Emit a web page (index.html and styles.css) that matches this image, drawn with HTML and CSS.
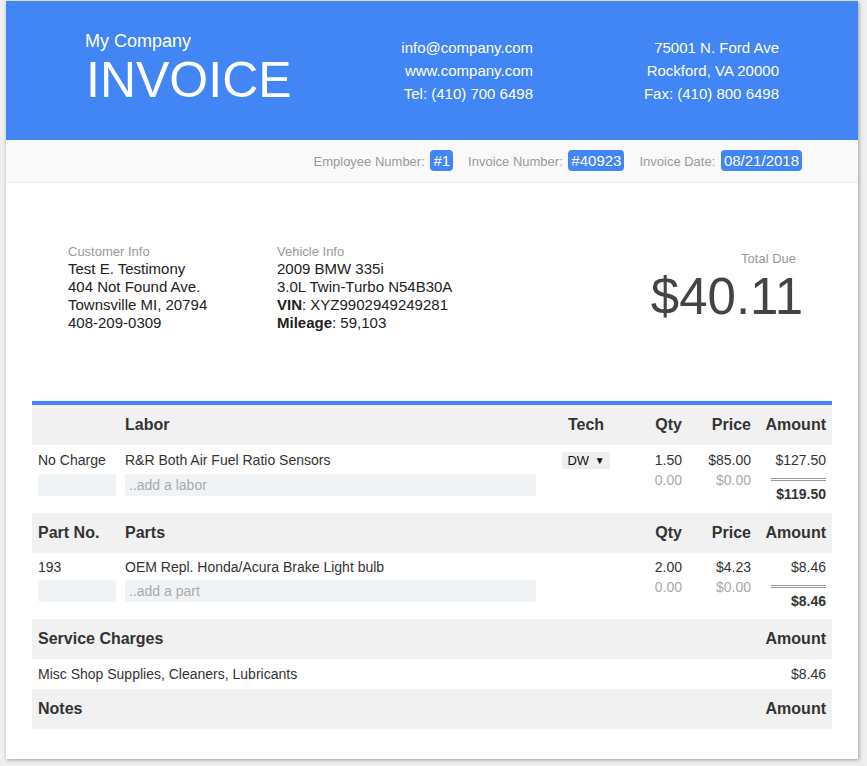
FILE: index.html
```html
<!DOCTYPE html>
<html>
<head>
<meta charset="utf-8">
<link rel="stylesheet" href="styles.css">
</head>
<body>
<div class="page">
  <header class="top">
    <div class="brand">
      <div class="company">My Company</div>
      <div class="title">INVOICE</div>
    </div>
    <div class="contact">
      <div>info@company.com</div>
      <div>www.company.com</div>
      <div>Tel: (410) 700 6498</div>
    </div>
    <div class="address">
      <div>75001 N. Ford Ave</div>
      <div>Rockford, VA 20000</div>
      <div>Fax: (410) 800 6498</div>
    </div>
  </header>

  <div class="meta">
    <div class="meta-item">Employee Number: <span class="badge">#1</span></div>
    <div class="meta-item">Invoice Number: <span class="badge">#40923</span></div>
    <div class="meta-item">Invoice Date: <span class="badge">08/21/2018</span></div>
  </div>

  <section class="info">
    <div class="info-col customer">
      <div class="label">Customer Info</div>
      <div>Test E. Testimony</div>
      <div>404 Not Found Ave.</div>
      <div>Townsville MI, 20794</div>
      <div>408-209-0309</div>
    </div>
    <div class="info-col vehicle">
      <div class="label">Vehicle Info</div>
      <div>2009 BMW 335i</div>
      <div>3.0L Twin-Turbo N54B30A</div>
      <div><b>VIN</b>: XYZ9902949249281</div>
      <div><b>Mileage</b>: 59,103</div>
    </div>
    <div class="total">
      <div class="label">Total Due</div>
      <div class="total-amount">$40.11</div>
    </div>
  </section>

  <div class="items">
    <div class="grid head">
      <div class="cell"></div>
      <div class="cell">Labor</div>
      <div class="cell center">Tech</div>
      <div class="cell right">Qty</div>
      <div class="cell right">Price</div>
      <div class="cell right">Amount</div>
    </div>
    <div class="grid row labor-row">
      <div class="cell c1">
        <div class="line">No Charge</div>
        <div class="field"></div>
      </div>
      <div class="cell">
        <div class="line">R&amp;R Both Air Fuel Ratio Sensors</div>
        <div class="field">..add a labor</div>
      </div>
      <div class="cell center">
        <span class="select">DW <span class="caret">▼</span></span>
      </div>
      <div class="cell right">
        <div class="line">1.50</div>
        <div class="line muted">0.00</div>
      </div>
      <div class="cell right">
        <div class="line">$85.00</div>
        <div class="line muted">$0.00</div>
      </div>
      <div class="cell right">
        <div class="line">$127.50</div>
        <div class="rule"></div>
        <div class="line strong">$119.50</div>
      </div>
    </div>

    <div class="grid head">
      <div class="cell">Part No.</div>
      <div class="cell">Parts</div>
      <div class="cell"></div>
      <div class="cell right">Qty</div>
      <div class="cell right">Price</div>
      <div class="cell right">Amount</div>
    </div>
    <div class="grid row parts-row">
      <div class="cell c1">
        <div class="line">193</div>
        <div class="field"></div>
      </div>
      <div class="cell">
        <div class="line">OEM Repl. Honda/Acura Brake Light bulb</div>
        <div class="field">..add a part</div>
      </div>
      <div class="cell"></div>
      <div class="cell right">
        <div class="line">2.00</div>
        <div class="line muted">0.00</div>
      </div>
      <div class="cell right">
        <div class="line">$4.23</div>
        <div class="line muted">$0.00</div>
      </div>
      <div class="cell right">
        <div class="line">$8.46</div>
        <div class="rule"></div>
        <div class="line strong">$8.46</div>
      </div>
    </div>

    <div class="grid head">
      <div class="cell wide">Service Charges</div>
      <div class="cell right">Amount</div>
    </div>
    <div class="grid simple">
      <div class="cell wide">Misc Shop Supplies, Cleaners, Lubricants</div>
      <div class="cell right">$8.46</div>
    </div>

    <div class="grid head">
      <div class="cell wide">Notes</div>
      <div class="cell right">Amount</div>
    </div>
  </div>
</div>
</body>
</html>
```

FILE: styles.css
```css
html, body {
  margin: 0;
  padding: 0;
}

body {
  background: #efefef;
  font-family: "Liberation Sans", Arial, sans-serif;
  color: #222;
}

.page {
  width: 852px;
  margin: 1px 0 8px 6px;
  background: #fff;
  box-shadow: 1px 1px 4px rgba(0, 0, 0, 0.35);
  padding-bottom: 30px;
}

/* Header */
.top {
  height: 139px;
  box-sizing: border-box;
  background: #4285f4;
  color: #fff;
  display: flex;
  align-items: flex-start;
  padding: 30px 79px 0 79px;
}

.brand {
  flex: 1;
}

.company {
  font-size: 18px;
  line-height: 21px;
}

.title {
  font-size: 50px;
  line-height: 52px;
  margin-top: 2px;
  margin-left: 1px;
}

.contact,
.address {
  text-align: right;
  font-size: 15px;
  line-height: 23px;
  margin-top: 5px;
}

.address {
  width: 246px;
}

/* Meta bar */
.meta {
  height: 42px;
  background: #f9f9f9;
  border-bottom: 1px solid #ececec;
  display: flex;
  justify-content: flex-end;
  align-items: center;
  gap: 15px;
  padding-right: 56px;
  font-size: 13px;
  color: #999;
}

.badge {
  display: inline-block;
  background: #4285f4;
  color: #fff;
  font-size: 15px;
  line-height: 21px;
  padding: 0 3px;
  border-radius: 4px;
  margin-left: 2px;
  margin-top: -1px;
}

/* Customer / vehicle */
.info {
  display: flex;
  padding: 61px 62px 69px;
  font-size: 15px;
  line-height: 18px;
  color: #222;
}

.label {
  font-size: 13px;
  line-height: 16px;
  color: #999;
}

.customer {
  width: 209px;
}

.vehicle {
  flex: 1;
}

.total {
  text-align: right;
  margin-top: 7px;
}

.total-amount {
  font-size: 51px;
  line-height: 51px;
  color: #444;
  margin-top: 4px;
  margin-right: -7px;
}

/* Items table */
.items {
  margin: 0 26px;
  border-top: 4px solid #4285f4;
  color: #333;
}

.grid {
  display: grid;
  grid-template-columns: 87px 423px 88px 58px 69px 75px;
}

.cell {
  padding: 0 6px;
  min-width: 0;
}

.c1 {
  padding-right: 3px;
}

.right {
  text-align: right;
}

.center {
  text-align: center;
}

.wide {
  grid-column: 1 / 6;
}

.head {
  height: 40px;
  background: #f1f1f1;
  align-items: center;
  font-size: 16px;
  font-weight: bold;
}

.row {
  font-size: 14px;
  align-items: start;
  box-sizing: border-box;
}

.labor-row {
  height: 68px;
  padding-top: 5px;
}

.parts-row {
  height: 66px;
  padding-top: 4px;
}

.line {
  line-height: 20px;
  white-space: nowrap;
}

.muted {
  color: #aaa;
}

.strong {
  font-weight: bold;
}

.field {
  height: 22px;
  margin-top: 3px;
  background: #f0f3f6;
  border-radius: 3px;
  font-size: 14px;
  line-height: 22px;
  color: #aaa;
  padding-left: 4px;
}

.labor-row .field {
  margin-top: 4px;
}

.rule {
  width: 55px;
  height: 0;
  margin: 8px 0 3px auto;
  border-top: 3px double #999;
}

.select {
  display: inline-block;
  margin-top: 2px;
  background: #efefef;
  font-size: 13px;
  line-height: 17px;
  padding: 0 5px;
  color: #111;
}

.caret {
  font-size: 10px;
  vertical-align: 1px;
  margin-left: 2px;
}

.simple {
  height: 30px;
  align-items: center;
  font-size: 14px;
}
```
